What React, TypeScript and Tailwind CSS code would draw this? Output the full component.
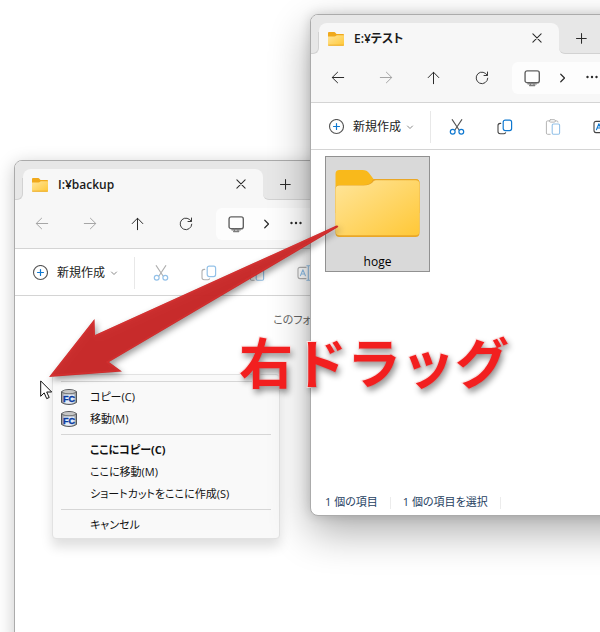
// App.tsx
// Two overlapping Explorer windows with a drop menu and a "right drag" callout.

import type { ReactNode } from "react";

type IconProps = { muted?: boolean };

const ink = (muted?: boolean) => (muted ? "#a6a6a6" : "#2b2b2b");
const accent = (muted?: boolean) => (muted ? "#93c1e8" : "#0f78d0");

function Glyph({ children, size = 16 }: { children: ReactNode; size?: number }) {
  return (
    <svg
      width={size}
      height={size}
      viewBox="0 0 16 16"
      fill="none"
      strokeLinecap="round"
      strokeLinejoin="round"
      aria-hidden="true"
    >
      {children}
    </svg>
  );
}

function ArrowLeftIcon({ muted }: IconProps) {
  return (
    <Glyph>
      <path d="M13.7 7.5H2.3M7.6 2.2 2.2 7.500l5.400 5.300" stroke={ink(muted)} />
    </Glyph>
  );
}

function ArrowRightIcon({ muted }: IconProps) {
  return (
    <Glyph>
      <path d="M2.3 7.500h11.400M8.400 2.200l5.400 5.300-5.400 5.300" stroke={ink(muted)} />
    </Glyph>
  );
}

function ArrowUpIcon() {
  return (
    <Glyph>
      <path d="M7.500 13.700V2.300M2.200 7.600l5.300-5.400 5.300 5.400" stroke={ink()} />
    </Glyph>
  );
}

function RefreshIcon() {
  return (
    <Glyph>
      <path d="M13.300 5.500A5.800 5.800 0 1 0 13.800 8.200M13.500 2v3.500H10" stroke="#3c3c3c" />
    </Glyph>
  );
}

function MonitorIcon() {
  return (
    <Glyph size={17}>
      <rect x="1" y="0.8" width="13.4" height="11.2" rx="2" stroke="#606060" strokeWidth="1.3" />
      <path d="M6 12.400v1.600M9.400 12.400v1.600M3.800 13.100h7.800M5.200 14.700h5" stroke="#7c7c7c" strokeWidth="1.1" />
    </Glyph>
  );
}

function PlusCircleIcon() {
  return (
    <Glyph>
      <circle cx="8.500" cy="7.500" r="7" stroke="#555" strokeWidth="1.1" />
      <path d="M8.500 4.500v6M5.500 7.500h6" stroke="#0f78d0" strokeWidth="1.2" />
    </Glyph>
  );
}

function CutIcon({ muted }: IconProps) {
  return (
    <Glyph>
      <path d="M3.200.6 9.900 10.800M12.800.6 6.100 10.800" stroke={muted ? "#b0b0b0" : "#555"} strokeWidth="1.1" />
      <circle cx="3.700" cy="12.800" r="2.400" stroke={accent(muted)} strokeWidth="1.2" />
      <circle cx="12.300" cy="12.800" r="2.400" stroke={accent(muted)} strokeWidth="1.2" />
    </Glyph>
  );
}

function CopyIcon({ muted }: IconProps) {
  return (
    <Glyph>
      <path d="M3.700 4.400H3.200A2.200 2.200 0 0 0 1 6.600v6a2.200 2.200 0 0 0 2.200 2.200h3.600a2.200 2.200 0 0 0 1.800-1" stroke={muted ? "#b0b0b0" : "#444"} strokeWidth="1.1" />
      <rect x="6.200" y="1.200" width="8.400" height="10.400" rx="2" stroke={accent(muted)} strokeWidth="1.2" />
    </Glyph>
  );
}

function PasteIcon({ muted }: IconProps) {
  return (
    <Glyph>
      <path d="M4.400 1.900H2.600A1.200 1.200 0 0 0 1.400 3.100v11a1.200 1.200 0 0 0 1.200 1.200h2.600M10.400 1.900h1.400A1.200 1.200 0 0 1 13 3.100" stroke={muted ? "#b4b4b4" : "#555"} strokeWidth="1" />
      <rect x="4.400" y="0.700" width="6" height="2.400" rx="1.200" stroke={muted ? "#b4b4b4" : "#555"} strokeWidth="1" />
      <rect x="7.200" y="5" width="7.400" height="10.300" rx="1.200" stroke={accent(muted)} strokeWidth="1.1" />
    </Glyph>
  );
}

function RenameIcon({ muted }: IconProps) {
  return (
    <Glyph>
      <path d="M9 2.400H3a2 2 0 0 0-2 2v7.200a2 2 0 0 0 2 2h6M13.400 2.600a2 2 0 0 1 1.900 2v6.800a2 2 0 0 1-1.900 2" stroke={muted ? "#b0b0b0" : "#444"} strokeWidth="1.1" />
      <path d="m3.400 10.800 2.500-6 2.500 6M4.200 9h3.400M11.300.8v14.400M9.800.8h3M9.800 15.200h3" stroke={accent(muted)} strokeWidth="1.1" />
    </Glyph>
  );
}

function SmallFolder() {
  return (
    <svg width="16" height="14" viewBox="0 0 16 14" aria-hidden="true">
      <path d="M0 1.300C0 .6.5.1 1.200.1h5c.6 0 1 .4 1.400.9l.9 1H15c.6 0 1 .4 1 1v6H0z" fill="#f0a91c" />
      <path d="M0 4.500h6.400c.8 0 1.200-.2 1.800-.8l.5-.5H16v9.700c0 .6-.3.800-.8.800H.8c-.5 0-.8-.2-.8-.8z" fill="url(#folderFill)" />
      <path d="M.3 13.200h15.400" stroke="#e9a21c" strokeWidth="0.800" />
    </svg>
  );
}

function LargeFolder() {
  return (
    <svg width="85" height="67" viewBox="0 0 84 67" aria-hidden="true">
      <path d="M0 4a4 4 0 0 1 4-4h23c3 0 5 1 6.500 3l4.500 6h42a4 4 0 0 1 4 4v30H0z" fill="#f9b91b" />
      <path d="M0 19a4 4 0 0 1 4-4h24c4 0 6-1 8-3l1-2c1-1 2-1 3-1h40a4 4 0 0 1 4 4v50a4 4 0 0 1-4 4H4a4 4 0 0 1-4-4z" fill="#e9a728" />
      <path d="M0 19.600a4 4 0 0 1 4-4h24c4 0 7-1 9-3l1-1.300c1-1 2-1.100 3-1.100h39a4 4 0 0 1 4 4v47a4 4 0 0 1-4 4H4a4 4 0 0 1-4-4z" fill="url(#folderFill)" />
    </svg>
  );
}

// FastCopy's barrel icon
function FastCopyIcon() {
  return (
    <svg width="16" height="16" viewBox="0 0 16 16" aria-hidden="true">
      <path d="M.5 2.500Q3.500.5 8 .5t7.500 2v11Q12.500 15.500 8 15.500T.5 13.500z" fill="#a2a3a5" stroke="#55575a" />
      <ellipse cx="8" cy="2.800" rx="6.400" ry="1.700" fill="#c6c6c6" />
      <path d="M1 3.400Q4 4.800 8 4.800t7-1.400" fill="none" stroke="#66686a" strokeWidth="0.800" />
      <path d="M2.500 5.400h11v7.800Q11 14.700 8 14.700t-5.500-1.500z" fill="#e4edf9" />
      <text
        x="8"
        y="12.900"
        textAnchor="middle"
        fontSize="9"
        fontWeight="700"
        fill="#0a3a9e"
        stroke="#0a3a9e"
        strokeWidth="0.400"
        fontFamily="Liberation Sans, sans-serif"
      >
        FC
      </text>
    </svg>
  );
}

function IconButton({ label, disabled, children }: { label: string; disabled?: boolean; children: ReactNode }) {
  return (
    <button type="button" aria-label={label} disabled={disabled} className="flex h-8 w-12 shrink-0 items-center justify-center">
      {children}
    </button>
  );
}

interface ExplorerWindowProps {
  title: string;
  canGoBack?: boolean;
  hasSelection?: boolean;
  className: string;
  children: ReactNode;
}

function ExplorerWindow({ title, canGoBack, hasSelection, className, children }: ExplorerWindowProps) {
  const muted = !hasSelection;

  return (
    <section className={`absolute flex flex-col overflow-hidden rounded-lg border border-[#ababab] bg-white ${className}`}>
      {/* Title bar: the strip under the tab shares the nav colour */}
      <header className="flex shrink-0 items-end bg-[linear-gradient(#e7e7e7_50%,#f7f7f7_50%)] pt-2">
        <div className="h-[22px] w-2 shrink-0 rounded-br-md border-r border-b border-[#d2d2d2] bg-[#e7e7e7]" />
        <div className="flex h-[31px] w-60 shrink-0 items-center rounded-t-lg bg-[#f7f7f7] pl-[9px]">
          <SmallFolder />
          <h2 className="ml-[10px] flex-1 text-xs font-semibold text-[#1b1b1b]">{title}</h2>
          <button type="button" aria-label="タブを閉じる" className="flex h-6 w-11 items-center justify-center pb-0.5">
            <Glyph size={12}>
              <path d="m2.500 2.500 11 11M13.500 2.500l-11 11" stroke="#2b2b2b" strokeWidth="1.400" />
            </Glyph>
          </button>
        </div>
        <div className="flex h-[31px] flex-1 items-center rounded-bl-md border-b border-[#d2d2d2] bg-[#e7e7e7]">
          <button type="button" aria-label="新しいタブ" className="flex h-6 w-11 items-center justify-center">
            <Glyph size={12}>
              <path d="M8.700 2v13M2 8.700h13" stroke="#2b2b2b" strokeWidth="1.400" />
            </Glyph>
          </button>
        </div>
      </header>

      {/* Navigation */}
      <nav className="flex h-[49px] shrink-0 items-center border-b border-[#d4d4d4] bg-[#f7f7f7] pl-[3px]">
        <IconButton label="戻る" disabled={!canGoBack}>
          <ArrowLeftIcon muted={!canGoBack} />
        </IconButton>
        <IconButton label="進む" disabled>
          <ArrowRightIcon muted />
        </IconButton>
        <IconButton label="上へ">
          <ArrowUpIcon />
        </IconButton>
        <IconButton label="更新">
          <RefreshIcon />
        </IconButton>
        <div className="ml-1.5 flex h-8 flex-1 items-center rounded-md bg-[#fdfdfd] pl-3">
          <button type="button" aria-label="PC" className="w-[18px]">
            <MonitorIcon />
          </button>
          <button type="button" aria-label="場所" className="ml-[15px] flex w-3 justify-center">
            <Glyph size={12}>
              <path d="M5 3l5 5-5 5" stroke="#2b2b2b" strokeWidth="1.600" />
            </Glyph>
          </button>
          <button type="button" aria-label="その他" className="ml-4 pb-0.5">
            <svg width="14" height="4" viewBox="0 0 14 4" fill="#2b2b2b" aria-hidden="true">
              <circle cx="2.500" cy="2" r="1.200" />
              <circle cx="7" cy="2" r="1.200" />
              <circle cx="11.500" cy="2" r="1.200" />
            </svg>
          </button>
        </div>
      </nav>

      {/* Command bar */}
      <div role="toolbar" className="flex h-[47px] shrink-0 items-center border-b border-[#d4d4d4] pt-px pl-[17px]">
        <button type="button" className="flex h-8 w-[102px] shrink-0 items-center text-xs text-[#1b1b1b]">
          <PlusCircleIcon />
          <span className="ml-[9px] flex-1 text-left whitespace-nowrap">新規作成</span>
          <span className="mr-4">
            <Glyph size={8}>
              <path d="m3 6 5 5 5-5" stroke="#8a8a8a" strokeWidth="2" />
            </Glyph>
          </span>
        </button>
        <div className="mr-0.5 h-8 w-px bg-[#e8e8e8]" />
        <IconButton label="切り取り" disabled={muted}>
          <CutIcon muted={muted} />
        </IconButton>
        <IconButton label="コピー" disabled={muted}>
          <CopyIcon muted={muted} />
        </IconButton>
        <IconButton label="貼り付け" disabled>
          <PasteIcon muted />
        </IconButton>
        <IconButton label="名前の変更" disabled={muted}>
          <RenameIcon muted={muted} />
        </IconButton>
      </div>

      {children}
    </section>
  );
}

function MenuItem({ children, icon, bold }: { children: ReactNode; icon?: ReactNode; bold?: boolean }) {
  return (
    <li role="none">
      <button
        type="button"
        role="menuitem"
        className={`flex h-[22px] w-full items-center pl-2 text-left text-[11px] whitespace-nowrap text-[#111] ${bold ? "font-bold" : ""}`}
      >
        <span className="mr-[13px] w-4">{icon}</span>
        {children}
      </button>
    </li>
  );
}

function MenuDivider() {
  return <li role="separator" className="mx-2 my-1 h-px bg-[#d6d6d6]" />;
}

export default function App() {
  return (
    <main className="relative min-h-screen overflow-hidden bg-white font-['Open_Sans','Noto_Sans_CJK_JP',sans-serif] [font-feature-settings:'palt']">
      {/* Shared gradients */}
      <svg width="0" height="0" className="absolute" aria-hidden="true">
        <defs>
          <linearGradient id="folderFill" x1="0" y1="0" x2="1" y2="1">
            <stop offset="0" stopColor="#ffe59a" />
            <stop offset="1" stopColor="#ffc837" />
          </linearGradient>
        </defs>
      </svg>

      <ExplorerWindow
        title="I:¥backup"
        className="top-40 -right-12 -bottom-4 left-3.5 shadow-[0_4px_18px_rgba(0,0,0,0.22)]"
      >
        <p className="pt-4 text-center text-[11px] text-[#666]">このフォルダーは空です。</p>
      </ExplorerWindow>

      {/* Drop menu */}
      <ul
        role="menu"
        className="absolute top-[374px] left-[52px] w-[228px] rounded border border-[#e2e2e2] bg-[#f9f9f9] py-0.5 shadow-[0_8px_12px_rgba(0,0,0,0.13)]"
      >
        <MenuDivider />
        <MenuItem icon={<FastCopyIcon />}>コピー(C)</MenuItem>
        <MenuItem icon={<FastCopyIcon />}>移動(M)</MenuItem>
        <MenuDivider />
        <MenuItem bold>ここにコピー(C)</MenuItem>
        <MenuItem>ここに移動(M)</MenuItem>
        <MenuItem>ショートカットをここに作成(S)</MenuItem>
        <MenuDivider />
        <MenuItem>キャンセル</MenuItem>
      </ul>

      <ExplorerWindow
        title="E:¥テスト"
        canGoBack
        hasSelection
        className="top-3.5 -right-12 left-[310px] shadow-[0_16px_40px_rgba(0,0,0,0.32),0_0_12px_rgba(0,0,0,0.16)]"
      >
        <div className="min-h-[340px] flex-1 pt-1.5 pl-3.5">
          <figure className="flex h-[116px] w-[105px] flex-col items-center border border-[#919191] bg-[#d9d9d9] pt-[13px]">
            <LargeFolder />
            <figcaption className="mt-[17px] text-xs text-black">hoge</figcaption>
          </figure>
        </div>
        <footer className="flex h-[25px] items-center pl-3.5 text-[11px] text-[#26415f]">
          <span className="mr-3">1 個の項目</span>
          <span className="mr-3 h-3 w-px bg-[#ececec]" />
          <span className="mr-3">1 個の項目を選択</span>
          <span className="h-3 w-px bg-[#ececec]" />
        </footer>
      </ExplorerWindow>

      {/* Drag arrow */}
      <svg
        width="300"
        height="164"
        viewBox="44 220 300 164"
        className="absolute top-[220px] left-11 overflow-visible drop-shadow-[2px_3px_3px_rgba(0,0,0,0.4)]"
        aria-hidden="true"
      >
        <path
          d="M49 377 94.500 319 95 335 336.500 225.500Q339.500 225.500 337.500 227.500L109 362 122 371.500Z"
          fill="#c92626"
          fillOpacity="0.960"
        />
        <path
          d="M51.500 375.300 93.700 321.600 94.200 336.500 335 227.200 107 362 119 370.700Z"
          fill="none"
          stroke="#dc3434"
          strokeOpacity="0.450"
          strokeWidth="1.500"
        />
      </svg>

      {/* Mouse pointer */}
      <svg width="13" height="20" viewBox="0 0 13 20" className="absolute top-[380px] left-10" aria-hidden="true">
        <path d="M.7.9v15.400l3.500-3.400 2.500 5.700 2.500-1.100-2.500-5.500h5z" fill="#fff" stroke="#111" />
      </svg>

      <p className="absolute top-[323px] left-[239px] text-[54px] leading-[80px] font-bold whitespace-nowrap text-[#f21f1f] [font-feature-settings:normal] [paint-order:stroke_fill] [-webkit-text-stroke:2px_#ffe6e6] [text-shadow:2px_4px_6px_rgba(0,0,0,0.45)]">
        右ドラッグ
      </p>
    </main>
  );
}
